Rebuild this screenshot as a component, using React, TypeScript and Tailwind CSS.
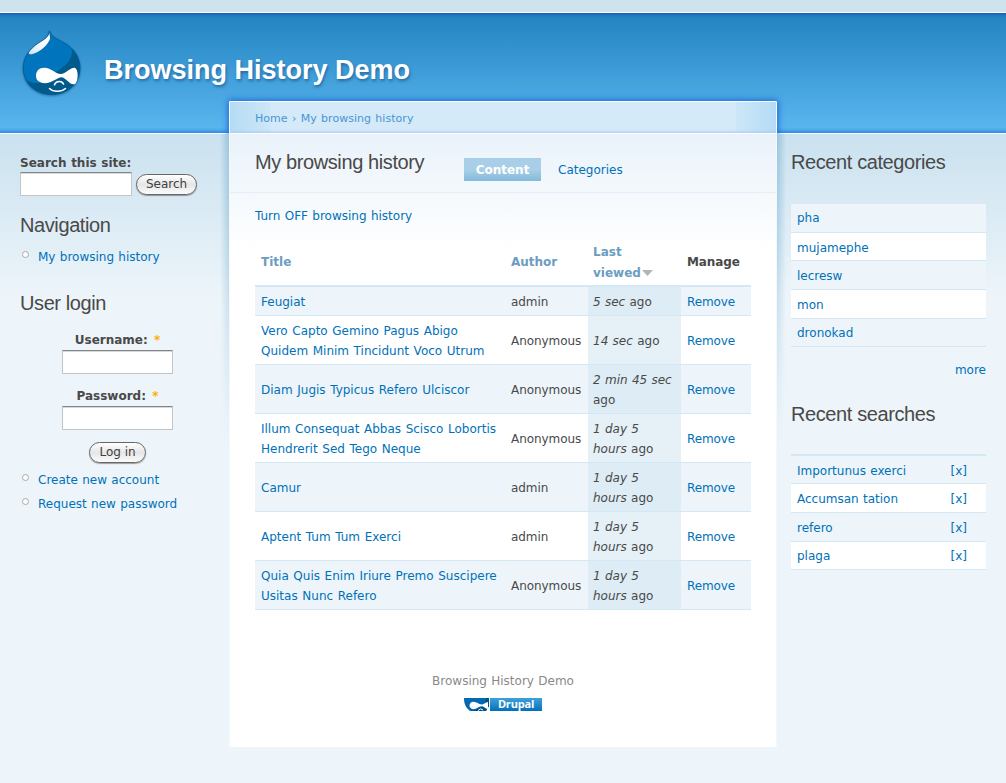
import React from "react";

const rows = [
  { title: ["Feugiat"], author: "admin", time: ["5 sec"], rest: "ago", wrap: false },
  { title: ["Vero Capto Gemino Pagus Abigo", "Quidem Minim Tincidunt Voco Utrum"], author: "Anonymous", time: ["14 sec"], rest: "ago", wrap: false },
  { title: ["Diam Jugis Typicus Refero Ulciscor"], author: "Anonymous", time: ["2 min 45 sec"], rest: "ago", wrap: true },
  { title: ["Illum Consequat Abbas Scisco Lobortis", "Hendrerit Sed Tego Neque"], author: "Anonymous", time: ["1 day 5", "hours"], rest: "ago", wrap: false },
  { title: ["Camur"], author: "admin", time: ["1 day 5", "hours"], rest: "ago", wrap: false },
  { title: ["Aptent Tum Tum Exerci"], author: "admin", time: ["1 day 5", "hours"], rest: "ago", wrap: false },
  { title: ["Quia Quis Enim Iriure Premo Suscipere", "Usitas Nunc Refero"], author: "Anonymous", time: ["1 day 5", "hours"], rest: "ago", wrap: false },
];

const categories = [
  { name: "pha", size: "h-[29px] bg-[#edf5fa]" },
  { name: "mujamephe", size: "h-[28px] pt-[2px] bg-white" },
  { name: "lecresw", size: "h-[29px] pt-px bg-[#edf5fa]" },
  { name: "mon", size: "h-[29px] pt-px bg-white" },
  { name: "dronokad", size: "h-[28px] bg-[#edf5fa]" },
];

const searches = [
  { name: "Importunus exerci", size: "h-[28px] pt-[2px] bg-[#edf5fa]" },
  { name: "Accumsan tation", size: "h-[29px] pt-[2px] bg-white" },
  { name: "refero", size: "h-[29px] pt-[2px] bg-[#edf5fa]" },
  { name: "plaga", size: "h-[28px] bg-white" },
];

function Heading({ children }: { children: React.ReactNode }) {
  return (
    <h2 className="whitespace-nowrap pb-[2px] font-['Liberation_Sans',Arial,sans-serif] text-[20px] leading-[24px] tracking-[-0.4px] text-[#494949] [word-spacing:0px]">
      {children}
    </h2>
  );
}

function Link({ children }: { children: React.ReactNode }) {
  return <a href="#" className="whitespace-nowrap text-[#0071b9]">{children}</a>;
}

function MenuItem({ children }: { children: React.ReactNode }) {
  return (
    <li className="flex h-6 items-center gap-[9px] pl-[2px]">
      <span className="mb-[5px] size-[7px] rounded-full border border-[#a9a9a9] bg-white" />
      <Link>{children}</Link>
    </li>
  );
}

function PillButton({ children, size }: { children: React.ReactNode; size: string }) {
  return (
    <button
      className={`${size} h-[21px] whitespace-nowrap rounded-full border border-[#666] bg-linear-to-b from-white via-[#e6e6e6] to-[#fbfbfb] text-center leading-[19px] text-[#404040] shadow-[0_1px_1px_rgba(0,0,0,0.35)]`}
    >
      {children}
    </button>
  );
}

function Field({ label, name, type }: { label: string; name: string; type: string }) {
  return (
    <>
      <label htmlFor={name} className="h-5 font-bold leading-5 [word-spacing:2px]">
        {label}: <span className="text-[#ffae00]">*</span>
      </label>
      <input
        id={name}
        type={type}
        className="h-[24px] w-[111px] border border-[#c4c4c4] border-t-[#868686] bg-white shadow-[inset_0_1px_0_#d8d8d8]"
      />
    </>
  );
}

const DROP =
  "M28.300 1.800C30.500 8 36 10 43.500 14C53 19.500 59 28 59 39C59 54.500 46.500 65.500 30.700 65.500C14.500 65.500 2.200 54.500 2.200 39C2.200 28 9 19.500 17.500 14C24 10 28 8 28.300 1.800Z";

function DrupalLogo() {
  return (
    <svg width="64" height="70" viewBox="0 0 64 70" className="shrink-0 drop-shadow-[0_1px_1px_rgba(0,40,90,0.45)]">
      <defs>
        <linearGradient id="shine" x1="1" y1="0" x2="0" y2="1">
          <stop offset="0.4" stopColor="#fff" />
          <stop offset="1" stopColor="#c9e3f4" />
        </linearGradient>
        <clipPath id="drop"><path d={DROP} /></clipPath>
      </defs>
      <g clipPath="url(#drop)">
        <rect width="64" height="70" fill="#0075be" />
        <path d="M50 16C53 26 49 34 39 40C31 45 30 52 18 54C12 54.500 7 53 4 50V70H64V16Z" fill="#005a8c" />
        <path d="M28.300 3.500C28.500 7 30 9 28 12C25 18 17 24 10.700 25.300C6.500 25.500 6.500 22 9 19.500C14 13.500 20 11 25 8C27 6.500 28 5.500 28.300 3.500Z" fill="url(#shine)" />
      </g>
      <path d={DROP} fill="none" stroke="#00598e" strokeWidth="0.8" />
      <path
        d="M23.500 38.700C30 38.700 34.500 44.800 39.500 45C45 44.800 48.500 38.700 53.500 38.700C58 39.500 57.800 55.300 52.500 55.300C48 55.300 44.500 48.500 40.500 48.300C36 48.500 31.500 54.200 23.800 54.200C18 54 15 51 15 46.800C15 42.200 18 38.700 23.500 38.700Z"
        fill="#fff"
      />
      <path d="M33.500 55.800C35 51.500 41 51.500 42.500 55M28.500 59.500C32 63.200 40.500 63.200 44.500 59.500" fill="none" stroke="#fff" strokeWidth="1.600" strokeLinecap="round" />
    </svg>
  );
}

function DrupalBadge() {
  return (
    <div className="flex h-[13px] w-[78px] gap-px">
      <svg width="25" height="13" viewBox="0 0 25 13">
        <path d="M0 0H25V8L22 13H6C2 10 0 6 0 0Z" fill="#0069b2" />
        <path d="M22 0H25V8L22 13H8C17 10 22 7 22 0Z" fill="#005287" />
        <path d="M9.500 3.800C13 3.800 14.500 6.200 17.500 6.600C20 6.400 21.500 4.300 24 4V11C21 11 20 8.300 17.500 8.300C14.500 8.500 12.500 11.200 9.500 11.200C4.200 11 4.200 4 9.500 3.800Z" fill="#fff" />
        <path d="M14 12.500Q16.500 9.500 19 12" stroke="#fff" fill="none" />
      </svg>
      <span className="w-[52px] bg-linear-to-b from-[#3da1dc] to-[#0070b9] text-center font-['Open_Sans',sans-serif] text-[11px] font-bold leading-[12px] tracking-[-0.2px] text-white">
        Drupal
      </span>
    </div>
  );
}

export default function App() {
  return (
    <div className="flex h-[783px] w-[1006px] flex-col overflow-hidden bg-[#edf5fa] font-['DejaVu_Sans',Verdana,sans-serif] text-[12px] leading-5 text-[#494949] [word-spacing:0.5px]">
      <div className="h-3 shrink-0 bg-[#cfe3ef]" />
      <header className="flex h-[122px] shrink-0 items-start border-y border-white bg-[linear-gradient(180deg,#1458a8_0px,#1f78be_2px,#2385c2_5px,#5ab5ee_114px,#4da9ec_117px,#2c86e0_120px)] pl-[21px] pt-[16px]">
        <DrupalLogo />
        <h1 className="ml-[19px] mt-[23px] whitespace-nowrap font-['Liberation_Sans',Arial,sans-serif] text-[27px] font-bold leading-9 text-white [word-spacing:0px] [text-shadow:1px_2px_3px_rgba(20,70,130,0.6)]">
          Browsing History Demo
        </h1>
      </header>

      <div className="flex min-h-0 flex-1 bg-linear-to-b from-[#cae1ef] to-[#edf5fa] to-[165px]">
        <aside className="w-[229px] shrink-0 pl-5 pt-[19px]">
          <label htmlFor="search" className="block h-[19px] font-bold">Search this site:</label>
          <div className="flex h-6 items-center gap-1">
            <input id="search" className="h-6 w-28 border border-[#c4c4c4] border-t-[#868686] bg-white shadow-[inset_0_1px_0_#d8d8d8]" />
            <PillButton size="mt-px w-[61px]">Search</PillButton>
          </div>
          <div className="mt-[17px]"><Heading>Navigation</Heading></div>
          <ul className="mt-[6px]"><MenuItem>My browsing history</MenuItem></ul>
          <div className="mt-[22px]"><Heading>User login</Heading></div>
          <form className="mt-[13px] flex w-[195px] flex-col items-center">
            <Field label="Username" name="username" type="text" />
            <div className="h-[12px]" />
            <Field label="Password" name="password" type="password" />
            <div className="h-[12px]" />
            <PillButton size="w-[57px]">Log in</PillButton>
          </form>
          <ul className="mt-[5px]">
            <MenuItem>Create new account</MenuItem>
            <MenuItem>Request new password</MenuItem>
          </ul>
        </aside>

        <main className="relative -mt-[33px] flex h-[646px] w-[548px] shrink-0 flex-col">
          <div className="absolute -left-[9px] top-[33px] h-[310px] w-[9px] bg-linear-to-l from-[#8fbdd9] to-transparent opacity-80 [mask-image:linear-gradient(#000,transparent)]" />
          <div className="absolute -right-[9px] top-[33px] h-[310px] w-[9px] bg-linear-to-r from-[#8fbdd9] to-transparent opacity-80 [mask-image:linear-gradient(#000,transparent)]" />
          <div className="h-[33px] shrink-0 rounded-t-[1px] shadow-[0_0_6px_1px_#1766d8] [clip-path:inset(-10px_-10px_0_-10px)]">
            <nav className="h-full rounded-t-[1px] border border-white bg-[linear-gradient(90deg,#b4dbf5,#cde7f8_40px,#d4eaf8_41px,#d4eaf8_505px,#cde7f8_506px,#b4dbf5)] pl-[25px] text-[11px] leading-[33px] tracking-[0.03px] text-[#4a94d4] shadow-[inset_0_-3px_3px_-2px_#aac8ee] [word-spacing:0.8px]">
              Home › My browsing history
            </nav>
          </div>
          <div className="relative flex-1 border-l border-r border-[#f3f9fd] bg-linear-to-b from-[#e9f2fa] to-white to-[115px] px-[25px]">
            <div className="-mx-[25px] flex h-[59px] items-start border-b border-[#e6eef3] pl-[25px] pt-[16px]">
              <div className="w-[209px]"><Heading>My browsing history</Heading></div>
              <div className="mt-2 flex">
                <a href="#" className="h-[23px] w-[77px] bg-linear-to-b from-[#a8cfe7] from-50% to-[#83b9db] text-center font-bold leading-[24px] text-white">Content</a>
                <a href="#" className="ml-[17px] leading-[24px] text-[#0071b9]">Categories</a>
              </div>
            </div>
            <p className="mt-[13px] h-5"><Link>Turn OFF browsing history</Link></p>

            <div className="mt-[14px] w-[496px]">
              <div className="grid h-[47px] grid-cols-[250px_83px_93px_70px] items-center border-b-2 border-[#d3e7f4] font-bold text-[#6b9dc2]">
                <span className="pb-[2px] pl-[6px]">Title</span>
                <span className="pb-[2px] pl-[6px]">Author</span>
                <span className="pl-[5px] leading-[21px]">
                  Last<br />
                  <span className="flex items-center">
                    viewed
                    <svg width="12" height="6" viewBox="-1 0 12 6" className="mb-px"><path d="M0 0H11L5.500 6Z" fill="#b4b4b4" /></svg>
                  </span>
                </span>
                <span className="pb-[2px] pl-[6px] tracking-[-0.1px] text-[#494949]">Manage</span>
              </div>
              {rows.map((r, i) => (
                <div
                  key={i}
                  className={`grid grid-cols-[250px_83px_93px_70px] items-stretch border-b border-[#d3e7f4] ${i === 0 ? "h-[29px]" : "h-[49px]"} ${i % 2 ? "bg-white" : "bg-[#edf5fa]"}`}
                >
                  <div className="flex flex-col justify-center pl-[6px] pt-[2px] [word-spacing:0.8px]">
                    {r.title.map((t) => <Link key={t}>{t}</Link>)}
                  </div>
                  <div className="flex items-center pl-[6px] pt-[2px] tracking-[-0.05px]">{r.author}</div>
                  <div className={`flex flex-col justify-center whitespace-nowrap pl-[5px] pt-[2px] ${i % 2 ? "bg-[#e5f0f7]" : "bg-[#ddecf5]"}`}>
                    {r.time.length > 1 && <em>{r.time[0]}</em>}
                    <span>
                      <em>{r.time[r.time.length - 1]}</em>
                      {r.wrap ? <br /> : " "}
                      {r.rest}
                    </span>
                  </div>
                  <div className="flex items-center pl-[6px] pt-[2px] tracking-[-0.1px]"><Link>Remove</Link></div>
                </div>
              ))}
            </div>

            <footer className="mt-[61px] flex flex-col items-center text-[#898989]">
              <p className="mb-[7px]">Browsing History Demo</p>
              <DrupalBadge />
            </footer>
          </div>
        </main>

        <aside className="ml-[14px] w-[195px] pt-[16px]">
          <Heading>Recent categories</Heading>
          <div className="mt-[28px]">
            {categories.map((c) => (
              <div key={c.name} className={`flex items-center border-b border-[#d3e7f4] pl-[6px] ${c.size}`}><Link>{c.name}</Link></div>
            ))}
          </div>
          <div className="mt-[13px] h-5 text-right"><Link>more</Link></div>
          <div className="mt-[22px]"><Heading>Recent searches</Heading></div>
          <div className="mt-[26px] border-t-2 border-[#d3e7f4]">
            {searches.map((s) => (
              <div key={s.name} className={`flex items-center justify-between border-b border-[#d3e7f4] pl-[6px] pr-[19px] ${s.size}`}>
                <Link>{s.name}</Link>
                <Link>[x]</Link>
              </div>
            ))}
          </div>
        </aside>
      </div>
    </div>
  );
}
